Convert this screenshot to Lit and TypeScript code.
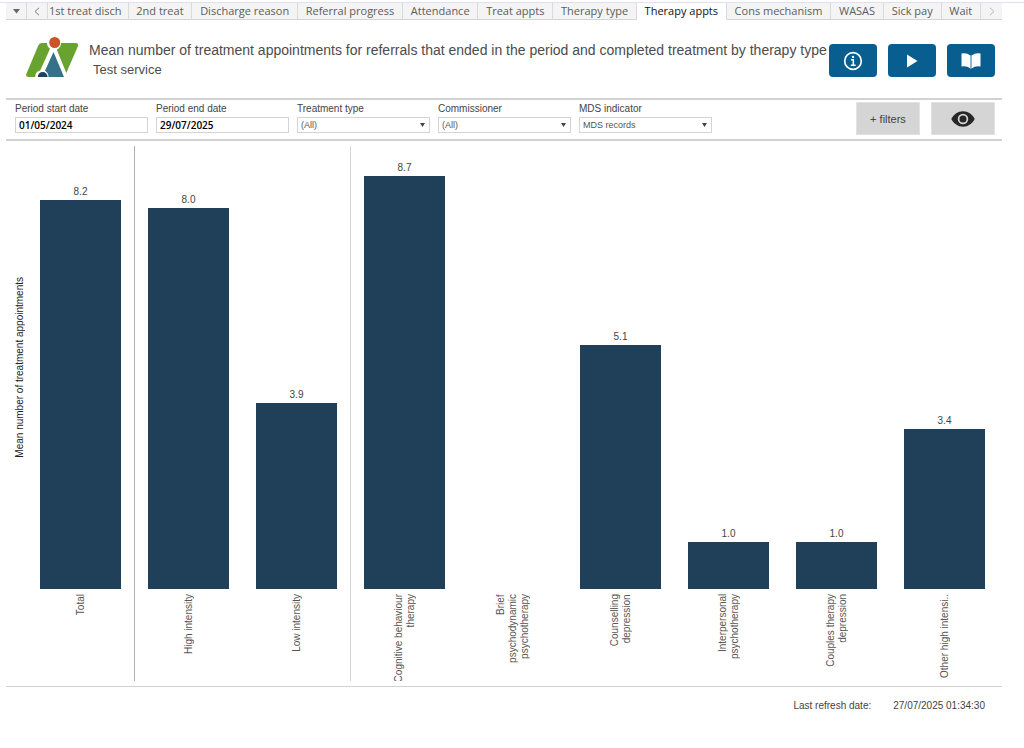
import { LitElement, html, css } from "lit";
import { customElement, property } from "lit/decorators.js";
import { classMap } from "lit/directives/class-map.js";

interface Bar {
  lines: string[];
  value: number;
  divider?: "strong" | "light";
}

const TABS = [
  "1st treat disch",
  "2nd treat",
  "Discharge reason",
  "Referral progress",
  "Attendance",
  "Treat appts",
  "Therapy type",
  "Therapy appts",
  "Cons mechanism",
  "WASAS",
  "Sick pay",
  "Wait",
];

const BARS: Bar[] = [
  { lines: ["Total"], value: 8.2, divider: "strong" },
  { lines: ["High intensity"], value: 8.04 },
  { lines: ["Low intensity"], value: 3.92, divider: "light" },
  { lines: ["Cognitive behaviour", "therapy"], value: 8.72 },
  { lines: ["Brief", "psychodynamic", "psychotherapy"], value: 0 },
  { lines: ["Counselling", "depression"], value: 5.14 },
  { lines: ["Interpersonal", "psychotherapy"], value: 1 },
  { lines: ["Couples therapy", "depression"], value: 1 },
  { lines: ["Other high intensi.."], value: 3.37 },
];

const AXIS_MAX = 9.3;

@customElement("tab-strip")
class TabStrip extends LitElement {
  @property() active = "";

  static styles = css`
    :host {
      display: block;
      padding: 0 22px 0 6px;
      border-top: 1px solid #e3def0;
    }
    nav {
      display: flex;
      height: 17px;
    }
    button,
    a {
      box-sizing: border-box;
      height: 17px;
      border: 0;
      border-right: 1px solid #dadada;
      border-bottom: 1px solid #d4d4d4;
      background: #f4f4f4;
      color: #5c5c5c;
      font: 500 11px/16px "Open Sans", "Noto Sans", sans-serif;
      text-decoration: none;
      text-align: center;
      white-space: nowrap;
    }
    button {
      flex: none;
      width: 21px;
      padding: 0;
      display: grid;
      place-items: center;
    }
    a {
      flex: 1 0 auto;
      padding: 0 7px;
    }
    a.first {
      flex: none;
      padding: 0 6px 0 1px;
    }
    .active {
      background: #fff;
      border-bottom-color: #fff;
      color: #111;
    }
    .next {
      border-right: 0;
    }
  `;

  render() {
    return html`<nav aria-label="Dashboards">
      <button aria-label="All tabs">
        <svg width="7" height="5" viewBox="0 0 7 5"><path d="M0 0h7L3.5 4.6z" fill="#666" /></svg>
      </button>
      <button aria-label="Previous tabs">
        <svg width="6" height="9" viewBox="0 0 6 9" fill="none" stroke="#777"><path d="M5 .8 1 4.5 5 8.2" /></svg>
      </button>
      ${TABS.map(
        (t, i) =>
          html`<a href="#" class=${classMap({ first: i === 0, active: t === this.active })}>${t}</a>`
      )}
      <button class="next" aria-label="Next tabs">
        <svg width="6" height="9" viewBox="0 0 6 9" fill="none" stroke="#b8b8b8"><path d="M1 .8 5 4.5 1 8.2" /></svg>
      </button>
    </nav>`;
  }
}

@customElement("page-header")
class PageHeader extends LitElement {
  static styles = css`
    :host {
      display: flex;
      align-items: flex-start;
      padding: 17px 29px 18px 26px;
      color: #4c4c4c;
    }
    .logo {
      flex: none;
      margin-right: 11px;
    }
    .titles {
      flex: 1;
      min-width: 0;
      padding-top: 3px;
    }
    h1,
    p {
      margin: 0;
      font-weight: 400;
      font-size: 14px;
      line-height: 20px;
      white-space: nowrap;
    }
    p {
      padding-left: 4px;
      font-size: 13px;
    }
    .actions {
      display: flex;
      gap: 11px;
      padding-top: 7px;
    }
    button {
      width: 48px;
      height: 33px;
      padding: 0;
      border: 0;
      border-radius: 4px;
      background: #075e8f;
      display: grid;
      place-items: center;
    }
  `;

  render() {
    return html`
      <svg class="logo" width="52" height="41" viewBox="0 0 52 41" role="img" aria-label="Logo">
        <path d="M15.5 6h5.5a7 7 0 0 0 3 5.8L14.2 33.5A6.2 6.2 0 0 0 9.3 40H2.6Q-.8 40 .4 36.800L12.300 8.500Q13.300 6 15.500 6z" fill="#68a32f" />
        <path d="M35 6h14.500Q53.100 6 51.800 9.500L40.300 36 30.800 12.700A7.500 7.500 0 0 0 35 6z" fill="#68a32f" />
        <path d="M27.500 15 38 40H22.500A7.400 7.400 0 0 0 19 33.800z" fill="#35728a" />
        <circle cx="28.700" cy="5.500" r="5.500" fill="#cb5428" />
        <path d="M11.800 40a4.900 4.900 0 0 1 9.800 0z" fill="#1f405a" />
      </svg>
      <div class="titles">
        <h1>Mean number of treatment appointments for referrals that ended in the period and completed treatment by therapy type</h1>
        <p>Test service</p>
      </div>
      <div class="actions">
        <button aria-label="Information">
          <svg width="20" height="20" viewBox="0 0 20 20" fill="none" stroke="#fff">
            <circle cx="10" cy="10" r="8.300" stroke-width="1.700" />
            <path d="M8 8.800h2.300V14M7.800 14.300h4.800" stroke-width="1.500" />
            <circle cx="10" cy="5.900" r="1.200" fill="#fff" stroke="none" />
          </svg>
        </button>
        <button aria-label="Play">
          <svg width="12" height="14" viewBox="0 0 12 14"><path d="M1 .5 11.500 7 1 13.500z" fill="#fff" /></svg>
        </button>
        <button aria-label="Guide">
          <svg width="20" height="18" viewBox="0 0 20 18">
            <path d="M.5 1.500Q5.500.500 9.500 3.500V16.500Q5.500 13.500.5 14.500zM19.500 1.500Q14.500.500 10.500 3.500V16.500Q14.500 13.500 19.500 14.500z" fill="#fff" />
            <path d="M10 3.500V17" stroke="#9dbfd2" />
          </svg>
        </button>
      </div>
    `;
  }
}

@customElement("filter-bar")
class FilterBar extends LitElement {
  static styles = css`
    :host {
      display: flex;
      align-items: flex-start;
      justify-content: space-between;
      gap: 16px;
      margin: 0 22px 0 6px;
      padding: 2px 7px 4px 9px;
      border: solid #d2d2d2;
      border-width: 2px 0;
    }
    .fields,
    .actions {
      display: flex;
    }
    .fields {
      gap: 8px;
    }
    .actions {
      gap: 11px;
    }
    .field {
      display: flex;
      flex-direction: column;
      gap: 2px;
      width: 133px;
    }
    label {
      font-size: 10px;
      line-height: 13px;
      color: #444;
    }
    .control {
      box-sizing: border-box;
      width: 100%;
      height: 16px;
      margin: 0;
      padding: 0 3px;
      border: 1px solid #d4d4d4;
      border-radius: 0;
      background: #fff;
    }
    input {
      color: #000;
      font: 600 10px/14px "Open Sans", "Noto Sans", sans-serif;
    }
    select {
      appearance: none;
      color: #555;
      font: 9px/14px "Liberation Sans", Arial, sans-serif;
    }
    .pick {
      display: grid;
      align-items: center;
    }
    .pick > * {
      grid-area: 1 / 1;
    }
    .pick svg {
      justify-self: end;
      margin-right: 5px;
      pointer-events: none;
    }
    button {
      box-sizing: border-box;
      width: 64px;
      height: 33px;
      padding: 0;
      border: 1px solid #e2e2e2;
      background: #d5d5d5;
      color: #444;
      font: 11px/16px "Liberation Sans", Arial, sans-serif;
      display: grid;
      place-items: center;
    }
  `;

  private dateField(id: string, label: string, value: string) {
    return html`<div class="field">
      <label for=${id}>${label}</label>
      <input class="control" id=${id} .value=${value} />
    </div>`;
  }

  private pickField(id: string, label: string, value: string) {
    return html`<div class="field">
      <label for=${id}>${label}</label>
      <div class="pick">
        <select class="control" id=${id}><option>${value}</option></select>
        <svg width="5" height="4" viewBox="0 0 5 4"><path d="M0 0h5L2.500 4z" fill="#444" /></svg>
      </div>
    </div>`;
  }

  render() {
    return html`
      <div class="fields">
        ${this.dateField("start", "Period start date", "01/05/2024")}
        ${this.dateField("end", "Period end date", "29/07/2025")}
        ${this.pickField("treatment", "Treatment type", "(All)")}
        ${this.pickField("commissioner", "Commissioner", "(All)")}
        ${this.pickField("mds", "MDS indicator", "MDS records")}
      </div>
      <div class="actions">
        <button>+ filters</button>
        <button aria-label="Show or hide">
          <svg width="24" height="16" viewBox="0 0 24 16">
            <path d="M.3 8C2.700 3.300 7 .3 12 .3S21.300 3.300 23.700 8C21.300 12.700 17 15.700 12 15.700S2.700 12.700.3 8z" fill="#262626" />
            <circle cx="12" cy="8" r="4.400" fill="none" stroke="#d5d5d5" stroke-width="1.700" />
          </svg>
        </button>
      </div>
    `;
  }
}

@customElement("bar-chart")
class BarChart extends LitElement {
  static styles = css`
    :host {
      display: grid;
      grid-template-columns: 21px 1fr;
      margin: 5px 25px 5px 6px;
    }
    .axis {
      display: flex;
      align-items: center;
      justify-content: center;
      margin-bottom: 92px;
      padding-left: 7px;
    }
    .axis span {
      font-size: 10px;
      line-height: 12px;
      color: #222;
    }
    .turned {
      writing-mode: vertical-rl;
      transform: rotate(180deg);
      white-space: nowrap;
    }
    .columns {
      display: grid;
      grid-template-columns: repeat(9, 1fr);
    }
    .column {
      box-sizing: border-box;
      display: flex;
      flex-direction: column;
      border-right: 1px solid transparent;
    }
    .strong {
      border-right-color: #b0b0b0;
    }
    .light {
      border-right-color: #d4d4d4;
    }
    .plot {
      flex: 1;
      display: flex;
      flex-direction: column;
      align-items: center;
    }
    .value {
      display: flex;
      align-items: flex-end;
      padding-bottom: 2px;
      box-sizing: border-box;
      font-size: 10px;
      line-height: 12px;
      color: #444;
    }
    .bar {
      width: 76%;
      background: #1f4058;
    }
    .label {
      box-sizing: border-box;
      height: 92px;
      padding-top: 5px;
      display: flex;
      justify-content: center;
      align-items: flex-start;
      overflow: hidden;
      font-size: 10px;
      line-height: 12px;
      color: #555;
      text-align: end;
    }
    .label .line {
      display: block;
    }
  `;

  render() {
    return html`
      <div class="axis"><span class="turned">Mean number of treatment appointments</span></div>
      <div class="columns">
        ${BARS.map(
          (b) => html`<div
            class=${classMap({ column: true, strong: b.divider === "strong", light: b.divider === "light" })}
          >
            <div class="plot">
              <div class="value" style="flex: ${AXIS_MAX - b.value} 1 0">${b.value ? b.value.toFixed(1) : ""}</div>
              <div class="bar" style="flex: ${b.value} 1 0"></div>
            </div>
            <div class="label">
              <span class="turned">${b.lines.map((l) => html`<span class="line">${l}</span>`)}</span>
            </div>
          </div>`
        )}
      </div>
    `;
  }
}

@customElement("app-root")
class AppRoot extends LitElement {
  static styles = css`
    :host {
      box-sizing: border-box;
      display: flex;
      flex-direction: column;
      min-height: 100vh;
      padding-top: 2px;
      background: #fff;
      font-family: "Liberation Sans", Arial, sans-serif;
    }
    bar-chart {
      flex: 1;
    }
    footer {
      display: flex;
      justify-content: flex-end;
      gap: 22px;
      margin: 0 22px 0 6px;
      padding: 12px 17px 36px;
      border-top: 1px solid #d2d2d2;
      font-size: 10px;
      line-height: 13px;
      color: #444;
    }
  `;

  render() {
    return html`
      <tab-strip active="Therapy appts"></tab-strip>
      <page-header></page-header>
      <filter-bar></filter-bar>
      <bar-chart></bar-chart>
      <footer><span>Last refresh date:</span><time>27/07/2025 01:34:30</time></footer>
    `;
  }
}
